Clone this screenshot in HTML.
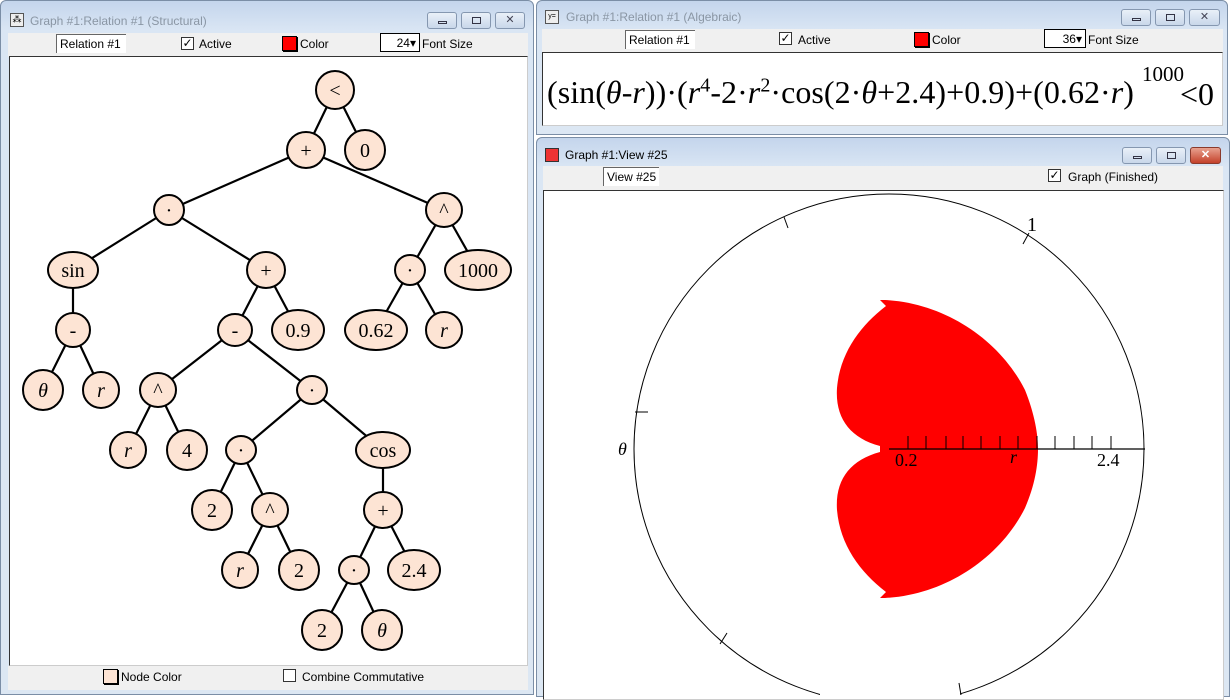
<!DOCTYPE html>
<html><head><meta charset="utf-8"><style>
*{margin:0;padding:0;box-sizing:border-box}
body{width:1231px;height:695px;overflow:hidden;background:#fff;font-family:"Liberation Sans",sans-serif;position:relative}
.win{position:absolute;background:linear-gradient(#c4d5ec,#dae6f4 30px,#dce7f3);border:1px solid #7b8ea6;border-radius:6px 6px 0 0}
.title{position:absolute;font-size:12px;color:#8a96a4;white-space:nowrap}
.btn{position:absolute;height:17px;border:1px solid #8597b0;border-radius:3px;background:linear-gradient(#e9f0f8,#c9d7ea)}
.btn.c{background:linear-gradient(#e8a18f,#c4412a);border-color:#8a3a2c}
.bar{position:absolute;background:#f0f0f0;font-size:12px;color:#000}
.bar span{position:absolute;white-space:nowrap}
.cb{position:absolute;width:13px;height:13px;border:1px solid #333;background:#fff;font-size:12px;line-height:11px;text-align:center}
.sw{position:absolute;width:15px;height:15px;border:1px solid #000;box-shadow:1px 1px 0 #000}
.tb{position:absolute;background:#fff;border-top:1px solid #666;border-left:1px solid #666;height:19px;font-size:12px;padding:2px 3px;white-space:nowrap;overflow:hidden}
.content{position:absolute;background:#fff;border:1px solid #333}
.ico{position:absolute;width:14px;height:14px;border:1px solid #555;background:#eee}
</style></head><body>

<!-- left window -->
<div class="win" style="left:0;top:0;width:534px;height:695px"></div>
<div class="ico" style="left:10px;top:13px;font-size:9px;line-height:11px;text-align:center">⁂</div>
<div class="title" style="left:30px;top:14px">Graph #1:Relation #1 (Structural)</div>
<div class="btn" style="left:427px;top:12px;width:30px"><div style="position:absolute;left:10px;top:8px;width:9px;height:3px;border:1px solid #334"></div></div>
<div class="btn" style="left:461px;top:12px;width:30px"><div style="position:absolute;left:10px;top:4px;width:9px;height:7px;border:1px solid #334"></div></div>
<div class="btn" style="left:495px;top:12px;width:30px;text-align:center;font-size:11px;color:#445">✕</div>
<div class="bar" style="left:8px;top:33px;width:520px;height:24px">
<div class="tb" style="left:48px;top:1px;width:70px">Relation #1</div>
<div class="cb" style="left:173px;top:4px">✓</div><span style="left:191px;top:4px">Active</span>
<div class="sw" style="left:274px;top:3px;background:#f00"></div><span style="left:292px;top:4px">Color</span>
<div class="tb" style="left:372px;top:0;width:40px;text-align:right;border:1px solid #000;background:#fff">24▾</div><span style="left:414px;top:4px">Font Size</span>
</div>
<div class="content" style="left:9px;top:56px;width:519px;height:610px;border-color:#333 #ccc #ccc #333"></div>
<div class="bar" style="left:8px;top:666px;width:520px;height:24px">
<div class="sw" style="left:95px;top:3px;background:#fde4d4"></div><span style="left:113px;top:4px">Node Color</span>
<div class="cb" style="left:275px;top:3px"></div><span style="left:294px;top:4px">Combine Commutative</span>
</div>
<svg style="position:absolute;left:0;top:0" width="534" height="695" font-family="Liberation Serif, serif" font-size="20">
<g stroke="#000" stroke-width="2.2">
<line x1="335" y1="90" x2="306" y2="150"/><line x1="335" y1="90" x2="365" y2="150"/>
<line x1="306" y1="150" x2="169" y2="210"/><line x1="306" y1="150" x2="444" y2="210"/>
<line x1="169" y1="210" x2="73" y2="270"/><line x1="169" y1="210" x2="266" y2="270"/>
<line x1="444" y1="210" x2="410" y2="270"/><line x1="444" y1="210" x2="478" y2="270"/>
<line x1="73" y1="270" x2="73" y2="330"/>
<line x1="266" y1="270" x2="235" y2="330"/><line x1="266" y1="270" x2="298" y2="330"/>
<line x1="410" y1="270" x2="376" y2="330"/><line x1="410" y1="270" x2="444" y2="330"/>
<line x1="73" y1="330" x2="43" y2="390"/><line x1="73" y1="330" x2="101" y2="390"/>
<line x1="235" y1="330" x2="158" y2="390"/><line x1="235" y1="330" x2="312" y2="390"/>
<line x1="158" y1="390" x2="128" y2="450"/><line x1="158" y1="390" x2="187" y2="450"/>
<line x1="312" y1="390" x2="241" y2="450"/><line x1="312" y1="390" x2="383" y2="450"/>
<line x1="241" y1="450" x2="212" y2="510"/><line x1="241" y1="450" x2="270" y2="510"/>
<line x1="383" y1="450" x2="383" y2="510"/>
<line x1="270" y1="510" x2="240" y2="570"/><line x1="270" y1="510" x2="299" y2="570"/>
<line x1="383" y1="510" x2="354" y2="570"/><line x1="383" y1="510" x2="414" y2="570"/>
<line x1="354" y1="570" x2="322" y2="630"/><line x1="354" y1="570" x2="382" y2="630"/>
</g>
<g fill="#fde4d4" stroke="#000" stroke-width="2">
<ellipse cx="335" cy="90" rx="19" ry="19"/><ellipse cx="306" cy="150" rx="19" ry="18"/><ellipse cx="365" cy="150" rx="20" ry="20"/>
<ellipse cx="169" cy="210" rx="15" ry="15"/><ellipse cx="444" cy="210" rx="18" ry="17"/>
<ellipse cx="73" cy="270" rx="25" ry="18"/><ellipse cx="266" cy="270" rx="19" ry="18"/><ellipse cx="410" cy="270" rx="15" ry="15"/><ellipse cx="478" cy="270" rx="33" ry="20"/>
<ellipse cx="73" cy="330" rx="17" ry="17"/><ellipse cx="235" cy="330" rx="17" ry="16"/><ellipse cx="298" cy="330" rx="26" ry="20"/><ellipse cx="376" cy="330" rx="31" ry="20"/><ellipse cx="444" cy="330" rx="18" ry="18"/>
<ellipse cx="43" cy="390" rx="20" ry="20"/><ellipse cx="101" cy="390" rx="18" ry="18"/><ellipse cx="158" cy="390" rx="18" ry="17"/><ellipse cx="312" cy="390" rx="15" ry="14"/>
<ellipse cx="128" cy="450" rx="18" ry="18"/><ellipse cx="187" cy="450" rx="20" ry="20"/><ellipse cx="241" cy="450" rx="15" ry="14"/><ellipse cx="383" cy="450" rx="27" ry="18"/>
<ellipse cx="212" cy="510" rx="20" ry="20"/><ellipse cx="270" cy="510" rx="18" ry="17"/><ellipse cx="383" cy="510" rx="19" ry="18"/>
<ellipse cx="240" cy="570" rx="18" ry="18"/><ellipse cx="299" cy="570" rx="20" ry="20"/><ellipse cx="354" cy="570" rx="15" ry="14"/><ellipse cx="414" cy="570" rx="26" ry="20"/>
<ellipse cx="322" cy="630" rx="20" ry="20"/><ellipse cx="382" cy="630" rx="20" ry="20"/>
</g>
<g text-anchor="middle" fill="#000">
<text x="335" y="97">&lt;</text><text x="306" y="157">+</text><text x="365" y="157">0</text>
<text x="169" y="217">·</text><text x="444" y="217">^</text>
<text x="73" y="277">sin</text><text x="266" y="277">+</text><text x="410" y="277">·</text><text x="478" y="277">1000</text>
<text x="73" y="337">-</text><text x="235" y="337">-</text><text x="298" y="337">0.9</text><text x="376" y="337">0.62</text><text x="444" y="337" font-style="italic">r</text>
<text x="43" y="397" font-style="italic">θ</text><text x="101" y="397" font-style="italic">r</text><text x="158" y="397">^</text><text x="312" y="397">·</text>
<text x="128" y="457" font-style="italic">r</text><text x="187" y="457">4</text><text x="241" y="457">·</text><text x="383" y="457">cos</text>
<text x="212" y="517">2</text><text x="270" y="517">^</text><text x="383" y="517">+</text>
<text x="240" y="577" font-style="italic">r</text><text x="299" y="577">2</text><text x="354" y="577">·</text><text x="414" y="577">2.4</text>
<text x="322" y="637">2</text><text x="382" y="637" font-style="italic">θ</text>
</g>
</svg>

<!-- top right window -->
<div class="win" style="left:536px;top:0;width:692px;height:135px"></div>
<div class="ico" style="left:545px;top:10px;font-size:7px;line-height:11px;text-align:center">y=</div>
<div class="title" style="left:566px;top:10px">Graph #1:Relation #1 (Algebraic)</div>
<div class="btn" style="left:1121px;top:9px;width:30px"><div style="position:absolute;left:10px;top:8px;width:9px;height:3px;border:1px solid #334"></div></div>
<div class="btn" style="left:1155px;top:9px;width:30px"><div style="position:absolute;left:10px;top:4px;width:9px;height:7px;border:1px solid #334"></div></div>
<div class="btn" style="left:1189px;top:9px;width:31px;text-align:center;font-size:11px;color:#445">✕</div>
<div class="bar" style="left:542px;top:29px;width:681px;height:24px">
<div class="tb" style="left:83px;top:1px;width:70px">Relation #1</div>
<div class="cb" style="left:237px;top:3px">✓</div><span style="left:256px;top:4px">Active</span>
<div class="sw" style="left:372px;top:3px;background:#f00"></div><span style="left:390px;top:4px">Color</span>
<div class="tb" style="left:502px;top:0;width:42px;text-align:right;border:1px solid #000;background:#fff">36▾</div><span style="left:546px;top:4px">Font Size</span>
</div>
<div class="content" style="left:542px;top:52px;width:681px;height:74px;border-color:#333 #ccc #ccc #333"></div>
<div style="position:absolute;left:547px;top:74px;font-family:'Liberation Serif',serif;font-size:32px;white-space:nowrap;color:#000;letter-spacing:0.05px">(sin(<i>θ</i>-<i>r</i>))·(<i>r</i><sup style="font-size:20px">4</sup>-2·<i>r</i><sup style="font-size:20px">2</sup>·cos(2·<i>θ</i>+2.4)+0.9)+(0.62·<i>r</i>)</div>
<div style="position:absolute;left:1142px;top:62px;font-family:'Liberation Serif',serif;font-size:21px;color:#000">1000</div>
<div style="position:absolute;left:1180px;top:76px;font-family:'Liberation Serif',serif;font-size:32px;color:#000">&lt;0</div>

<!-- bottom right window -->
<div class="win" style="left:536px;top:137px;width:694px;height:560px"></div>
<div class="ico" style="left:545px;top:148px;background:#e33;border-color:#333"></div>
<div class="title" style="left:565px;top:148px;color:#000">Graph #1:View #25</div>
<div class="btn" style="left:1122px;top:147px;width:30px"><div style="position:absolute;left:10px;top:8px;width:9px;height:3px;border:1px solid #334"></div></div>
<div class="btn" style="left:1156px;top:147px;width:30px"><div style="position:absolute;left:10px;top:4px;width:9px;height:7px;border:1px solid #334"></div></div>
<div class="btn c" style="left:1190px;top:147px;width:31px;text-align:center;font-size:11px;color:#fff;font-weight:bold">✕</div>
<div class="bar" style="left:543px;top:166px;width:680px;height:24px">
<div class="tb" style="left:60px;top:1px;width:56px">View #25</div>
<div class="cb" style="left:505px;top:3px">✓</div><span style="left:525px;top:4px">Graph (Finished)</span>
</div>
<div class="content" style="left:543px;top:190px;width:681px;height:510px;border-color:#333 #ccc #ccc #333"></div>
<svg style="position:absolute;left:0;top:0" width="1231" height="695">
<circle cx="889" cy="449" r="255" fill="none" stroke="#000" stroke-width="1"/>
<rect x="820" y="690" width="140" height="6" fill="#fff"/>
<path d="M885,300 C945,303 1000,340 1025,390 C1035,415 1038,435 1038,449 C1038,465 1035,485 1025,508 C1000,558 945,595 885,598 L880,598 L886,592 C860,572 840,545 837,510 C835,480 850,460 880,452 L880,446 C850,438 835,418 837,388 C840,353 860,326 886,306 L880,300 Z" fill="#f00"/>
<line x1="889" y1="449" x2="1145" y2="449" stroke="#000" stroke-width="1.2"/>
<g stroke="#000" stroke-width="1">
<line x1="908" y1="436" x2="908" y2="449"/><line x1="926" y1="436" x2="926" y2="449"/><line x1="946" y1="436" x2="946" y2="449"/><line x1="963" y1="436" x2="963" y2="449"/><line x1="981" y1="436" x2="981" y2="449"/><line x1="1000" y1="436" x2="1000" y2="449"/><line x1="1018" y1="436" x2="1018" y2="449"/><line x1="1037" y1="436" x2="1037" y2="449"/><line x1="1055" y1="436" x2="1055" y2="449"/><line x1="1074" y1="436" x2="1074" y2="449"/><line x1="1092" y1="436" x2="1092" y2="449"/><line x1="1111" y1="436" x2="1111" y2="449"/>
<line x1="635" y1="412" x2="648" y2="412"/><line x1="784" y1="217" x2="788" y2="228"/><line x1="1029" y1="233" x2="1023" y2="244"/><line x1="727" y1="633" x2="720" y2="644"/><line x1="959" y1="683" x2="961" y2="695"/>
</g>
<g font-family="Liberation Serif,serif" font-size="18" fill="#000">
<text x="895" y="466">0.2</text><text x="1010" y="463" font-style="italic">r</text><text x="1097" y="466">2.4</text>
<text x="1027" y="231" font-size="20">1</text><text x="618" y="455" font-style="italic">θ</text>
</g>
</svg>
</body></html>
